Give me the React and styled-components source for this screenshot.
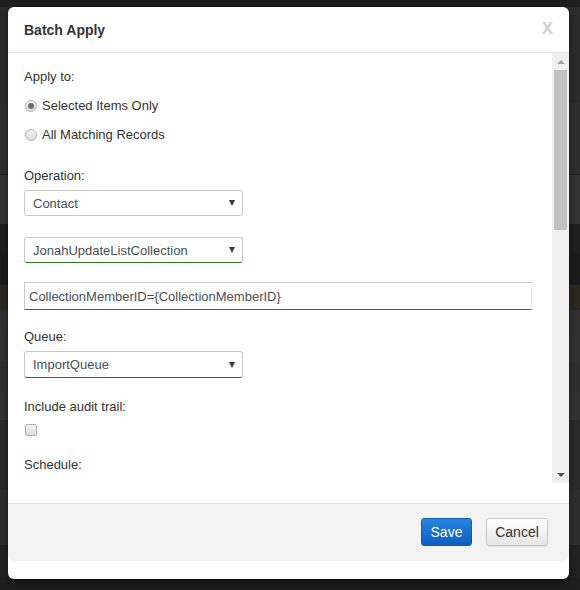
import React from "react";
import styled, { createGlobalStyle } from "styled-components";

const GlobalStyle = createGlobalStyle`
  html, body { margin: 0; padding: 0; }
  body {
    width: 580px;
    height: 590px;
    overflow: hidden;
    font-family: "Liberation Sans", Arial, sans-serif;
    background: linear-gradient(
      to bottom,
      #1f1f1f 0px, #1f1f1f 7px,
      #2c2c2c 7px, #2c2c2c 103px,
      #2f2f2f 103px, #2f2f2f 174px,
      #232323 174px, #232323 175px,
      #343434 175px, #343434 224px,
      #1f1f1f 224px, #1f1f1f 253px,
      #1c1c1c 253px, #1c1c1c 285px,
      #2b2921 285px, #2b2921 310px,
      #313131 310px, #313131 335px,
      #333333 335px, #333333 362px,
      #2f2f2f 362px, #2f2f2f 392px,
      #333333 392px, #333333 420px,
      #2b2b2b 420px, #2b2b2b 490px,
      #2e2e2e 490px, #2e2e2e 545px,
      #222222 545px, #222222 578px,
      #1e1e1e 578px
    );
  }
`;

const Backdrop = styled.div`
  padding: 7px 11px 11px 8px;
`;

const Modal = styled.div`
  width: 561px;
  height: 572px;
  background: #fff;
  border-radius: 6px;
  display: flex;
  flex-direction: column;
  overflow: hidden;
  box-shadow: 0 3px 9px rgba(0, 0, 0, 0.5);
`;

const Header = styled.div`
  height: 46px;
  flex: none;
  box-sizing: border-box;
  border-bottom: 1px solid #e5e5e5;
  display: flex;
  align-items: center;
  justify-content: space-between;
  padding: 0 16px 0 16px;
`;

const Title = styled.h4`
  margin: 0;
  font-size: 14px;
  font-weight: bold;
  color: #333;
`;

const Close = styled.span`
  font-size: 17px;
  font-weight: bold;
  color: #cfcfcf;
  line-height: 1;
  margin-top: -2px;
`;

const ScrollArea = styled.div`
  height: 430px;
  flex: none;
  display: flex;
`;

const Content = styled.div`
  flex: 1;
  overflow: hidden;
  padding: 15px 0 0 16px;
  display: flex;
  flex-direction: column;
  align-items: flex-start;
`;

const Label = styled.div`
  font-size: 13px;
  line-height: 18px;
  color: #333;
  margin-top: ${(p) => p.$mt || 0}px;
`;

const RadioRow = styled.label`
  display: flex;
  align-items: center;
  gap: 5px;
  font-size: 13px;
  line-height: 18px;
  color: #333;
  margin-top: 11px;
`;

const RadioDot = styled.span`
  width: 12px;
  height: 12px;
  margin-left: 1px;
  border-radius: 50%;
  box-sizing: border-box;
  border: 1px solid #b4b4b4;
  background: linear-gradient(#f4f4f4, #dcdcdc);
  display: flex;
  align-items: center;
  justify-content: center;
  &::after {
    content: "";
    width: 6px;
    height: 6px;
    border-radius: 50%;
    background: ${(p) => (p.$checked ? "#6d6d6d" : "transparent")};
  }
`;

const SelectBox = styled.div`
  width: 219px;
  height: ${(p) => p.$h || 26}px;
  box-sizing: border-box;
  margin-top: ${(p) => p.$mt || 0}px;
  border: 1px solid #c8c8c8;
  border-radius: 3px;
  border-bottom-color: ${(p) => (p.$valid ? "#2a7a1c" : "#c8c8c8")};
  display: flex;
  align-items: center;
  justify-content: space-between;
  padding: 0 6px 0 8px;
  font-size: 13px;
  color: #4a4f58;
`;

const Arrow = styled.span`
  width: 0;
  height: 0;
  border-left: 3.5px solid transparent;
  border-right: 3.5px solid transparent;
  border-top: 6px solid #3a3a3a;
  margin-right: 1px;
`;

const TextInput = styled.div`
  width: 508px;
  height: 28px;
  box-sizing: border-box;
  margin-top: 19px;
  border: 1px solid #c8c8c8;
  border-right-color: #e8e8e8;
  border-bottom-color: #2a7a1c;
  display: flex;
  align-items: center;
  padding: 0 4px;
  font-size: 13px;
  color: #4a4f58;
`;

const Checkbox = styled.span`
  width: 12px;
  height: 12px;
  margin: 8px 0 0 1px;
  box-sizing: border-box;
  border: 1px solid #b0b0b0;
  border-radius: 2px;
  background: linear-gradient(#f4f4f4, #dcdcdc);
`;

const Scrollbar = styled.div`
  width: 17px;
  flex: none;
  background: #f0f0f0;
  display: flex;
  flex-direction: column;
  align-items: center;
  padding-right: 2px;
  box-sizing: border-box;
  padding-left: 2px;
`;

const ScrollBtn = styled.div`
  height: 17px;
  width: 13px;
  flex: none;
  display: flex;
  align-items: center;
  justify-content: center;
  &::after {
    content: "";
    width: 0;
    height: 0;
    border-left: 4px solid transparent;
    border-right: 4px solid transparent;
    ${(p) =>
      p.$up
        ? "border-bottom: 4px solid #a3a3a3;"
        : "border-top: 4px solid #505050;"}
  }
`;

const Thumb = styled.div`
  width: 13px;
  height: 160px;
  background: #c1c1c1;
  flex: none;
`;

const Track = styled.div`
  flex: 1;
`;

const Spacer = styled.div`
  height: 20px;
  flex: none;
`;

const Footer = styled.div`
  height: 58px;
  flex: none;
  box-sizing: border-box;
  background: #f3f3f3;
  border-top: 1px solid #dcdcdc;
  border-radius: 0 0 6px 6px;
  display: flex;
  justify-content: flex-end;
  align-items: flex-start;
  gap: 14px;
  padding: 14px 21px 0 0;
`;

const Button = styled.button`
  height: 28px;
  width: ${(p) => p.$w}px;
  box-sizing: border-box;
  padding: 0 0 1px;
  font-family: "Liberation Sans", Arial, sans-serif;
  font-size: 14px;
  border-radius: 3px;
  cursor: pointer;
  color: ${(p) => (p.$primary ? "#fff" : "#333")};
  border: 1px solid ${(p) => (p.$primary ? "#0d5cb5" : "#c6c6c6")};
  background: ${(p) =>
    p.$primary
      ? "linear-gradient(#2a84dc, #0b5fc2)"
      : "linear-gradient(#ffffff, #e6e6e6)"};
  box-shadow: ${(p) =>
    p.$primary ? "none" : "0 1px 1px rgba(0,0,0,0.08)"};
`;

export default function App() {
  return (
    <>
      <GlobalStyle />
      <Backdrop>
        <Modal>
          <Header>
            <Title>Batch Apply</Title>
            <Close>X</Close>
          </Header>
          <ScrollArea>
            <Content>
              <Label>Apply to:</Label>
              <RadioRow>
                <RadioDot $checked />
                Selected Items Only
              </RadioRow>
              <RadioRow>
                <RadioDot />
                All Matching Records
              </RadioRow>
              <Label $mt={23}>Operation:</Label>
              <SelectBox $mt={5}>
                Contact
                <Arrow />
              </SelectBox>
              <SelectBox $mt={21} $valid>
                JonahUpdateListCollection
                <Arrow />
              </SelectBox>
              <TextInput>CollectionMemberID={"{"}CollectionMemberID{"}"}</TextInput>
              <Label $mt={18}>Queue:</Label>
              <SelectBox $mt={5} $h={27} $valid>
                ImportQueue
                <Arrow />
              </SelectBox>
              <Label $mt={20}>Include audit trail:</Label>
              <Checkbox />
              <Label $mt={20}>Schedule:</Label>
            </Content>
            <Scrollbar>
              <ScrollBtn $up />
              <Thumb />
              <Track />
              <ScrollBtn />
            </Scrollbar>
          </ScrollArea>
          <Spacer />
          <Footer>
            <Button $primary $w={51}>Save</Button>
            <Button $w={62}>Cancel</Button>
          </Footer>
        </Modal>
      </Backdrop>
    </>
  );
}
